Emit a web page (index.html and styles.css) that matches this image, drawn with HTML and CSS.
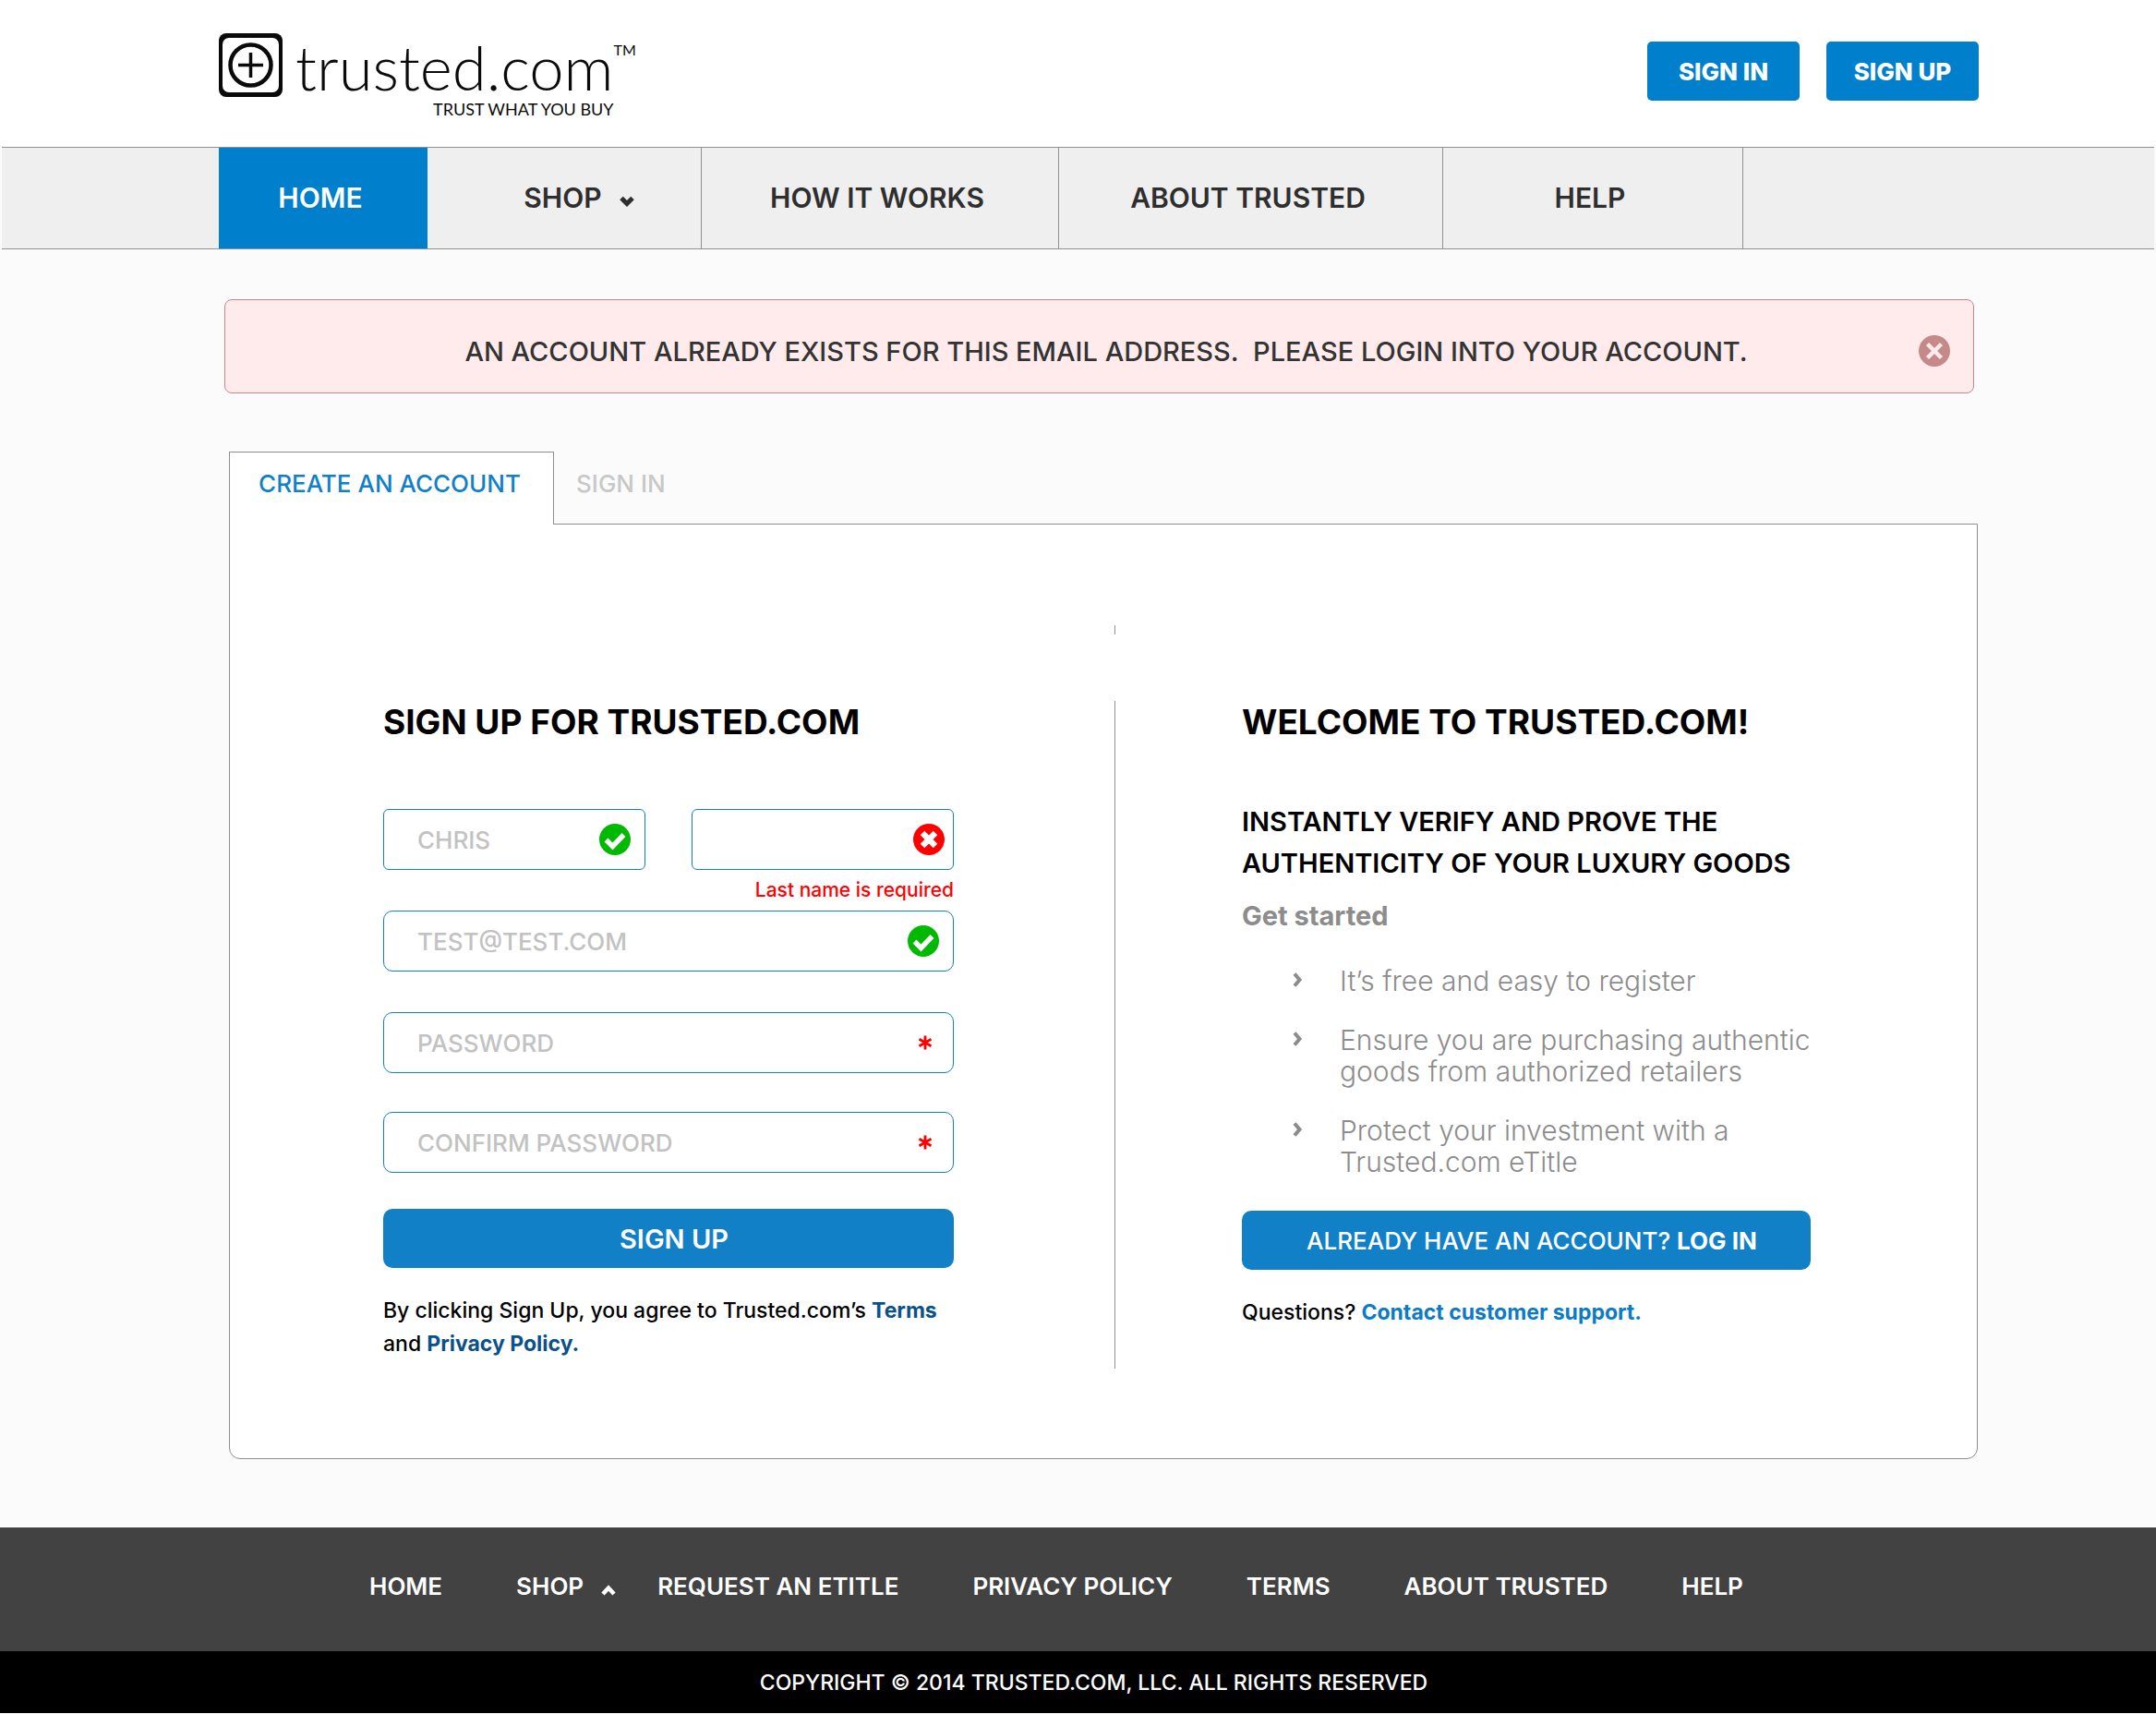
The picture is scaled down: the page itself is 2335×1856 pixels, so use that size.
FILE: index.html
```html
<!DOCTYPE html>
<html lang="en">
<head>
<meta charset="utf-8">
<title>Create an account | Trusted.com</title>
<meta name="viewport" content="width=device-width, initial-scale=1">
<link rel="stylesheet" href="styles.css">
</head>
<body>
<svg class="defs" width="0" height="0" aria-hidden="true">
  <symbol id="check" viewBox="0 0 34 34"><circle cx="17" cy="17" r="17" fill="#00b900"/><path d="M7.500 17.500l7 7L26.500 12" fill="none" stroke="#fff" stroke-width="5.500"/></symbol>
  <symbol id="cross" viewBox="0 0 34 34"><circle cx="17" cy="17" r="17" fill="#f00"/><path d="M10 10l14 14M24 10L10 24" fill="none" stroke="#fff" stroke-width="6.500"/></symbol>
  <symbol id="close" viewBox="0 0 34 34"><circle cx="17" cy="17" r="17" fill="#c58989"/><path d="M9.500 9.500l15 15M24.500 9.500l-15 15" fill="none" stroke="#ffebeb" stroke-width="4.500"/></symbol>
  <symbol id="star" viewBox="0 0 16 16"><path d="M8 0.500v15M1.500 4.200l13 7.600M14.500 4.200l-13 7.600" fill="none" stroke="#f00" stroke-width="2.800"/></symbol>
  <symbol id="down" viewBox="0 0 16 12"><path d="M2 2.500l6 6 6-6" fill="none" stroke="currentColor" stroke-width="5"/></symbol>
  <symbol id="up" viewBox="0 0 16 12"><path d="M2 10l6-6.500L14 10" fill="none" stroke="currentColor" stroke-width="4.500"/></symbol>
  <symbol id="right" viewBox="0 0 12 16"><path d="M3 1.500L8.500 8 3 14.500" fill="none" stroke="currentColor" stroke-width="4"/></symbol>
</svg>

<header class="header">
  <a class="logo" href="#" aria-label="Trusted.com home">
    <svg class="logo-mark" viewBox="0 0 69 69" aria-hidden="true">
      <rect width="69" height="69" rx="8" fill="#0a0a0a"/>
      <rect x="4" y="5" width="61" height="59" rx="7" fill="#fff"/>
      <circle cx="34.500" cy="34.500" r="22" fill="none" stroke="#0a0a0a" stroke-width="4.500"/>
      <path d="M34.500 21v27M21 34.500h27" stroke="#0a0a0a" stroke-width="3.500"/>
    </svg>
    <span class="logo-words">
      <span class="logo-name">trusted.com</span>
      <span class="logo-tag">TRUST WHAT YOU BUY</span>
    </span>
    <span class="logo-tm">TM</span>
  </a>
  <div class="header-actions">
    <button class="small-button" type="button">SIGN IN</button>
    <button class="small-button" type="button">SIGN UP</button>
  </div>
</header>

<nav class="nav" aria-label="Main">
  <a class="nav-item current" href="#">HOME</a>
  <a class="nav-item shop" href="#">SHOP <svg class="caret" aria-hidden="true"><use href="#down"/></svg></a>
  <a class="nav-item" href="#">HOW IT WORKS</a>
  <a class="nav-item" href="#">ABOUT TRUSTED</a>
  <a class="nav-item" href="#">HELP</a>
</nav>

<main class="main">
  <div class="alert" role="alert">
    <p class="alert-text">AN ACCOUNT ALREADY EXISTS FOR THIS EMAIL ADDRESS.&nbsp; PLEASE LOGIN INTO YOUR ACCOUNT.</p>
    <button class="alert-close" type="button" aria-label="Dismiss"><svg class="badge" aria-hidden="true"><use href="#close"/></svg></button>
  </div>

  <div class="tabs" role="tablist">
    <button class="tab active" type="button" role="tab" aria-selected="true">CREATE AN ACCOUNT</button>
    <button class="tab" type="button" role="tab" aria-selected="false">SIGN IN</button>
  </div>

  <div class="panel">
    <section class="signup">
      <h1 class="title">SIGN UP FOR TRUSTED.COM</h1>
      <form class="form">
        <div class="names">
          <div class="field"><input class="input" type="text" aria-label="First name" value="CHRIS"><svg class="mark" aria-hidden="true"><use href="#check"/></svg></div>
          <div class="field"><input class="input" type="text" aria-label="Last name" aria-describedby="last-error"><svg class="mark last" aria-hidden="true"><use href="#cross"/></svg></div>
        </div>
        <p class="error" id="last-error">Last name is required</p>
        <div class="field"><input class="input" type="text" aria-label="Email" value="TEST@TEST.COM"><svg class="mark" aria-hidden="true"><use href="#check"/></svg></div>
        <div class="field password"><input class="input" type="password" aria-label="Password" placeholder="PASSWORD"><svg class="mark star" aria-hidden="true"><use href="#star"/></svg></div>
        <div class="field confirm"><input class="input" type="password" aria-label="Confirm password" placeholder="CONFIRM PASSWORD"><svg class="mark star" aria-hidden="true"><use href="#star"/></svg></div>
        <button class="wide-button submit" type="submit">SIGN UP</button>
      </form>
      <p class="note">By clicking Sign Up, you agree to Trusted.com’s <a class="link dark" href="#">Terms</a><br>and <a class="link dark" href="#">Privacy Policy.</a></p>
    </section>

    <div class="divider"><span class="tick"></span><span class="rule"></span></div>

    <section class="welcome">
      <h2 class="title">WELCOME TO TRUSTED.COM!</h2>
      <h3 class="subtitle">INSTANTLY VERIFY AND PROVE THE<br>AUTHENTICITY OF YOUR LUXURY GOODS</h3>
      <h4 class="started">Get started</h4>
      <ul class="benefits">
        <li class="benefit"><svg class="bullet" aria-hidden="true"><use href="#right"/></svg><span>It’s free and easy to register</span></li>
        <li class="benefit"><svg class="bullet" aria-hidden="true"><use href="#right"/></svg><span>Ensure you are purchasing authentic<br>goods from authorized retailers</span></li>
        <li class="benefit"><svg class="bullet" aria-hidden="true"><use href="#right"/></svg><span>Protect your investment with a<br>Trusted.com eTitle</span></li>
      </ul>
      <button class="wide-button login" type="button">ALREADY HAVE AN ACCOUNT? <b>LOG IN</b></button>
      <p class="note">Questions? <a class="link" href="#">Contact customer support.</a></p>
    </section>
  </div>
</main>

<footer>
  <nav class="footer-nav" aria-label="Footer">
    <a class="footer-link" href="#">HOME</a>
    <a class="footer-link footer-shop" href="#">SHOP <svg class="caret" aria-hidden="true"><use href="#up"/></svg></a>
    <a class="footer-link" href="#">REQUEST AN ETITLE</a>
    <a class="footer-link" href="#">PRIVACY POLICY</a>
    <a class="footer-link" href="#">TERMS</a>
    <a class="footer-link" href="#">ABOUT TRUSTED</a>
    <a class="footer-link" href="#">HELP</a>
  </nav>
  <p class="copyright">COPYRIGHT © 2014 TRUSTED.COM, LLC. ALL RIGHTS RESERVED</p>
</footer>
</body>
</html>
```
FILE: styles.css
```css
* { box-sizing: border-box; }

body {
  margin: 0;
  background: #fbfbfb;
  color: #000;
  font-family: Inter, "Liberation Sans", sans-serif;
  font-size: 23px;
}

h1, h2, h3, h4, p, ul { margin: 0; padding: 0; }
a { color: inherit; text-decoration: none; }
button, input { font-family: inherit; margin: 0; }
button { border: 0; cursor: pointer; }
svg { display: block; flex: none; }
.defs { position: absolute; }

/* Header */
.header {
  display: flex;
  justify-content: space-between;
  align-items: flex-start;
  padding: 36px 192px 0 237px;
  min-height: 159px;
  background: #fff;
}

.logo { display: flex; color: #0a0a0a; font-family: Lato, sans-serif; }
.logo-mark { width: 69px; height: 69px; }
.logo-words { display: flex; flex-direction: column; align-items: flex-end; margin-left: 14px; }
.logo-name { font-size: 67px; font-weight: 300; line-height: 72px; }
.logo-tag { font-size: 18px; line-height: 20px; }
.logo-tm { padding-top: 8px; font-size: 16px; line-height: 20px; }

.header-actions { display: flex; gap: 29px; padding-top: 9px; }
.small-button {
  width: 165px;
  height: 64px;
  border-radius: 5px;
  background: #007fcc;
  color: #fff;
  font-size: 26px;
  font-weight: 800;
}

/* Main navigation */
.nav {
  display: grid;
  grid-template-columns: 226fr 297fr 387fr 416fr 325fr 445fr;
  margin: 0 2px;
  padding-left: 235px;
  border-top: 1px solid #909090;
  border-bottom: 1px solid #909090;
  background: #efefef;
}
.nav-item {
  display: flex;
  align-items: center;
  justify-content: center;
  height: 109px;
  padding: 0 6px 2px 0;
  border-right: 1px solid #909090;
  color: #2e2e2e;
  font-size: 30px;
  font-weight: 600;
}
.nav-item.current { border: 0; background: #007fcc; color: #fff; }
.nav-item.shop { gap: 19px; padding-left: 38px; }
.caret { width: 16px; height: 12px; margin-top: 8px; }

/* Main area */
.main { padding: 54px 193px 74px 243px; }

.alert {
  display: flex;
  align-items: center;
  height: 102px;
  margin-right: 4px;
  padding: 10px 25px 0 74px;
  border: 1px solid #c98488;
  border-radius: 8px;
  background: #ffebeb;
}
.alert-text { flex: 1; color: #333; font-size: 29px; font-weight: 500; text-align: center; }
.alert-close { padding: 0; background: none; }
.badge { width: 34px; height: 34px; }

.tabs { display: flex; margin: 63px 0 0 5px; }
.tab {
  height: 79px;
  margin-bottom: -1px;
  padding: 0 28px 11px 24px;
  background: none;
  color: #c8c8c8;
  font-size: 26px;
  font-weight: 500;
}
.tab.active {
  width: 352px;
  border: 1px solid #8e8e8e;
  border-bottom: 0;
  background: #fff;
  color: #1280c7;
  z-index: 1;
}

.panel {
  display: grid;
  grid-template-columns: 958fr 1px 933fr;
  margin-left: 5px;
  padding: 109px 0 97px;
  border: 1px solid #8e8e8e;
  border-radius: 0 0 12px 12px;
  background: #fff;
}
.divider { display: flex; flex-direction: column; gap: 72px; }
.tick { height: 10px; background: #909090; }
.rule { flex: 1; background: #909090; }

.signup { padding: 82px 174px 9px 166px; }
.welcome { padding: 82px 180px 0 137px; }
.title { font-size: 37px; font-weight: 700; line-height: 45px; white-space: nowrap; }

/* Sign-up form */
.form { margin-top: 72px; }
.names { display: grid; grid-template-columns: 1fr 1fr; gap: 50px; }
.field { position: relative; }
.input {
  display: block;
  width: 100%;
  height: 66px;
  padding: 0 70px 0 36px;
  border: 1px solid #1280c7;
  border-radius: 10px;
  background: #fff;
  color: #c2c2c2;
  font-size: 26px;
  font-weight: 500;
}
.names .input { border-radius: 6px; }
.input::placeholder { color: #c2c2c2; opacity: 1; }
.mark { position: absolute; top: 16px; right: 16px; width: 34px; height: 34px; }
.mark.last { right: 10px; }
.mark.star { top: 25px; right: 23px; width: 16px; height: 16px; }
.error { padding: 8px 0; color: #f00; font-size: 21px; font-weight: 500; line-height: 28px; text-align: right; }
.password { margin-top: 44px; }
.confirm { margin-top: 42px; }
.wide-button {
  display: block;
  width: 100%;
  height: 64px;
  padding: 0 0 0 12px;
  border-radius: 10px;
  background: #1280c7;
  color: #fff;
}
.submit { margin-top: 39px; font-size: 29px; font-weight: 600; }
.note { margin-top: 28px; font-weight: 500; line-height: 36px; }
.link { color: #0c7bc6; font-weight: 700; }
.link.dark { color: #0a5089; }

/* Welcome column */
.subtitle { margin-top: 63px; font-size: 29px; font-weight: 600; line-height: 45px; white-space: nowrap; }
.started { margin-top: 18px; color: #8c8c8c; font-size: 29px; font-weight: 700; line-height: 34px; }
.benefits { display: grid; gap: 30px; margin: 36px 0; padding-left: 54px; list-style: none; }
.benefit { display: flex; gap: 40px; color: #8c8c8c; font-size: 30px; font-weight: 300; line-height: 34px; white-space: nowrap; }
.bullet { width: 12px; height: 16px; margin-top: 8px; }
.login { font-size: 26px; font-weight: 500; }

/* Footer */
.footer-nav {
  display: flex;
  gap: 80px;
  padding: 0 400px;
  background: #424242;
  color: #fff;
  font-size: 26px;
  font-weight: 600;
  line-height: 128px;
  height: 134px;
}
.footer-link { white-space: nowrap; }
.footer-shop { display: flex; align-items: center; gap: 19px; margin-right: -35px; height: 128px; }
.copyright {
  padding: 2px 0 0 34px;
  background: #000;
  color: #fff;
  font-size: 23px;
  font-weight: 500;
  line-height: 65px;
  text-align: center;
}
```
